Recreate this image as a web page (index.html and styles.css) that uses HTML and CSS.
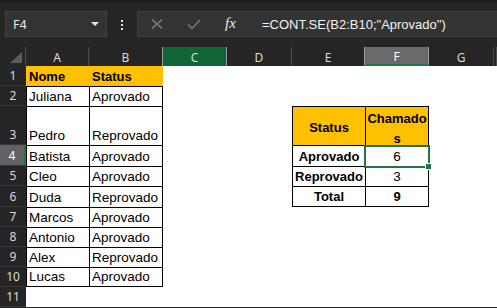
FILE: index.html
```html
<!DOCTYPE html>
<html lang="pt">
<head>
  <meta charset="UTF-8">
  <title>CONT.SE</title>
  <link rel="stylesheet" href="styles.css">
</head>
<body>

<div class="topstrip"></div>

<div class="formula-row">
  <div class="namebox"><span>F4</span><span class="caret"></span></div>
  <div class="dots">
    <svg width="2" height="10" viewBox="0 0 2 10"><rect x="0" y="0" width="2" height="2"/><rect x="0" y="4" width="2" height="2"/><rect x="0" y="8" width="2" height="2"/></svg>
  </div>
  <div class="formula">
    <span class="fbtn">
      <svg width="12" height="10" viewBox="0 0 12 10"><path d="M1 0.5 L11 9.5 M11 0.5 L1 9.5"/></svg>
    </span>
    <span class="fbtn">
      <svg width="14" height="11" viewBox="0 0 14 11"><path d="M1 5.5 L5 9.5 L13 1"/></svg>
    </span>
    <span class="fbtn fx">fx</span>
    <span class="ftext">=CONT.SE(B2:B10;"Aprovado")</span>
  </div>
</div>

<div class="sheet">
  <div class="corner"><span class="tri"></span></div>
  <div class="ch">A</div><div class="ch">B</div><div class="ch ch-green">C</div><div class="ch">D</div><div class="ch">E</div><div class="ch ch-sel">F</div><div class="ch">G</div><div class="ch"></div>

  <div class="rh">1</div>
  <div class="cell hd">Nome</div><div class="cell hd">Status</div>
  <div class="cell"></div><div class="cell"></div><div class="cell"></div><div class="cell"></div><div class="cell"></div><div class="cell"></div>

  <div class="rh">2</div>
  <div class="cell box">Juliana</div><div class="cell box box-r">Aprovado</div>
  <div class="cell"></div><div class="cell"></div><div class="cell"></div><div class="cell"></div><div class="cell"></div><div class="cell"></div>

  <div class="rh">3</div>
  <div class="cell box">Pedro</div><div class="cell box box-r">Reprovado</div>
  <div class="cell"></div><div class="cell"></div>
  <div class="cell box yel b mid">Status</div>
  <div class="cell box box-r yel b wrap">Chamados</div>
  <div class="cell"></div><div class="cell"></div>

  <div class="rh rh-sel">4</div>
  <div class="cell box">Batista</div><div class="cell box box-r">Aprovado</div>
  <div class="cell"></div><div class="cell"></div>
  <div class="cell box b ctr">Aprovado</div>
  <div class="cell box box-r ctr sel">6<span class="handle"></span></div>
  <div class="cell"></div><div class="cell"></div>

  <div class="rh">5</div>
  <div class="cell box">Cleo</div><div class="cell box box-r">Aprovado</div>
  <div class="cell"></div><div class="cell"></div>
  <div class="cell box b ctr">Reprovado</div>
  <div class="cell box box-r ctr">3</div>
  <div class="cell"></div><div class="cell"></div>

  <div class="rh">6</div>
  <div class="cell box">Duda</div><div class="cell box box-r">Reprovado</div>
  <div class="cell"></div><div class="cell"></div>
  <div class="cell box box-b b ctr">Total</div>
  <div class="cell box box-r box-b b ctr">9</div>
  <div class="cell"></div><div class="cell"></div>

  <div class="rh">7</div>
  <div class="cell box">Marcos</div><div class="cell box box-r">Aprovado</div>
  <div class="cell"></div><div class="cell"></div><div class="cell"></div><div class="cell"></div><div class="cell"></div><div class="cell"></div>

  <div class="rh">8</div>
  <div class="cell box">Antonio</div><div class="cell box box-r">Aprovado</div>
  <div class="cell"></div><div class="cell"></div><div class="cell"></div><div class="cell"></div><div class="cell"></div><div class="cell"></div>

  <div class="rh">9</div>
  <div class="cell box">Alex</div><div class="cell box box-r">Reprovado</div>
  <div class="cell"></div><div class="cell"></div><div class="cell"></div><div class="cell"></div><div class="cell"></div><div class="cell"></div>

  <div class="rh">10</div>
  <div class="cell box box-b">Lucas</div><div class="cell box box-r box-b">Aprovado</div>
  <div class="cell"></div><div class="cell"></div><div class="cell"></div><div class="cell"></div><div class="cell"></div><div class="cell"></div>

  <div class="rh">11</div>
  <div class="cell"></div><div class="cell"></div><div class="cell"></div><div class="cell"></div><div class="cell"></div><div class="cell"></div><div class="cell"></div><div class="cell"></div>
</div>

</body>
</html>
```

FILE: styles.css
```css
html, body {
  margin: 0;
  background: #252525;
  overflow: hidden;
  font-family: 'Liberation Sans', Arial, sans-serif;
}
.topstrip {
  height: 3px;
  background: #1c1c1c;
}

/* name box + formula bar */
.formula-row {
  display: flex;
  align-items: center;
  height: 26px;
  padding: 8px 0 10px 5px;
}
.namebox {
  width: 102px;
  height: 26px;
  box-sizing: border-box;
  display: flex;
  align-items: center;
  justify-content: space-between;
  padding: 0 7px 0 7px;
  background: #333;
  border: 1px solid #404040;
  color: #e8e8e8;
  font: 12.5px 'Noto Sans', sans-serif;
}
.caret {
  width: 0;
  height: 0;
  border-left: 4px solid transparent;
  border-right: 4px solid transparent;
  border-top: 4px solid #e6e6e6;
}
.dots {
  width: 30px;
  display: flex;
  justify-content: center;
  padding-top: 1px;
}
.dots svg {
  fill: #e0e0e0;
  display: block;
}
.formula {
  flex: 1;
  height: 26px;
  box-sizing: border-box;
  display: flex;
  align-items: center;
  background: #333;
  border: 1px solid #404040;
  border-right: none;
}
.fbtn {
  width: 37px;
  display: flex;
  justify-content: center;
  align-items: center;
}
.fbtn svg {
  display: block;
  fill: none;
  stroke: #747474;
  stroke-width: 1.7;
}
.fx {
  font: italic 15px 'Liberation Serif', serif;
  color: #e8e8e8;
  margin-top: -2px;
}
.ftext {
  padding-left: 13px;
  color: #f2f2f2;
  font-size: 13px;
  white-space: nowrap;
}

/* grid */
.sheet {
  display: grid;
  grid-template-columns: 26px 63px 74px 64px 65px 73px 64px 65px 3px;
  grid-template-rows: 19px 20px 20px 39px 21px 20px 21px 20px 20px 20px 20px 20px;
}
.corner {
  display: flex;
  align-items: flex-end;
  justify-content: flex-end;
  padding: 0 3px 3px 0;
  border-right: 1px solid #4a4a4a;
}
.tri {
  width: 12px;
  height: 11px;
  background: #5c5c5c;
  clip-path: polygon(100% 0, 100% 100%, 0 100%);
}
.ch {
  display: flex;
  align-items: center;
  justify-content: center;
  padding-top: 1px;
  border-right: 1px solid #4a4a4a;
  color: #dadada;
  font: 12px 'Noto Sans', sans-serif;
}
.ch-green {
  background: #0f6535;
  border-left: 1px solid #9a9a9a;
  border-right: 1px solid #9a9a9a;
  margin-left: -1px;
}
.ch-sel {
  background: #6a6a6a;
  border-left: 1px solid #9a9a9a;
  border-right: 1px solid #9a9a9a;
  border-bottom: 2px solid #1d7a44;
  margin-left: -1px;
  color: #fff;
}
.rh {
  display: flex;
  align-items: flex-end;
  justify-content: center;
  padding-bottom: 2px;
  border-bottom: 1px solid #383838;
  color: #dadada;
  font: 12px/14px 'Noto Sans', sans-serif;
}
.rh-sel {
  background: #626262;
  border-right: 2px solid #217346;
  color: #fff;
}

/* cells */
.cell {
  display: flex;
  align-items: flex-end;
  box-sizing: border-box;
  padding: 0 2px 2px;
  background: #fff;
  color: #000;
  font-size: 13.5px;
  line-height: 15px;
  white-space: nowrap;
}
.hd {
  background: #ffc000;
  font-weight: bold;
  font-size: 13px;
  border-left: 1px solid transparent;
}
.box {
  border-top: 1px solid #000;
  border-left: 1px solid #000;
}
.box-r {
  border-right: 1px solid #000;
}
.box-b {
  border-bottom: 1px solid #000;
}
.yel {
  background: #ffc000;
}
.b {
  font-weight: bold;
  font-size: 13px;
}
.ctr {
  justify-content: center;
}
.mid {
  align-items: center;
  justify-content: center;
  padding-top: 5px;
  line-height: 19.5px;
}
.wrap {
  align-items: flex-start;
  justify-content: center;
  text-align: center;
  white-space: normal;
  word-break: break-all;
  padding: 2px 0 0;
  line-height: 19.5px;
}
.sel {
  position: relative;
}
.sel::before {
  content: '';
  position: absolute;
  top: -1px;
  left: -2px;
  right: -2px;
  bottom: -2px;
  border: 2px solid #217346;
}
.handle {
  position: absolute;
  right: -4px;
  bottom: -4px;
  width: 5px;
  height: 5px;
  background: #217346;
  border: 1px solid #fff;
}
```
